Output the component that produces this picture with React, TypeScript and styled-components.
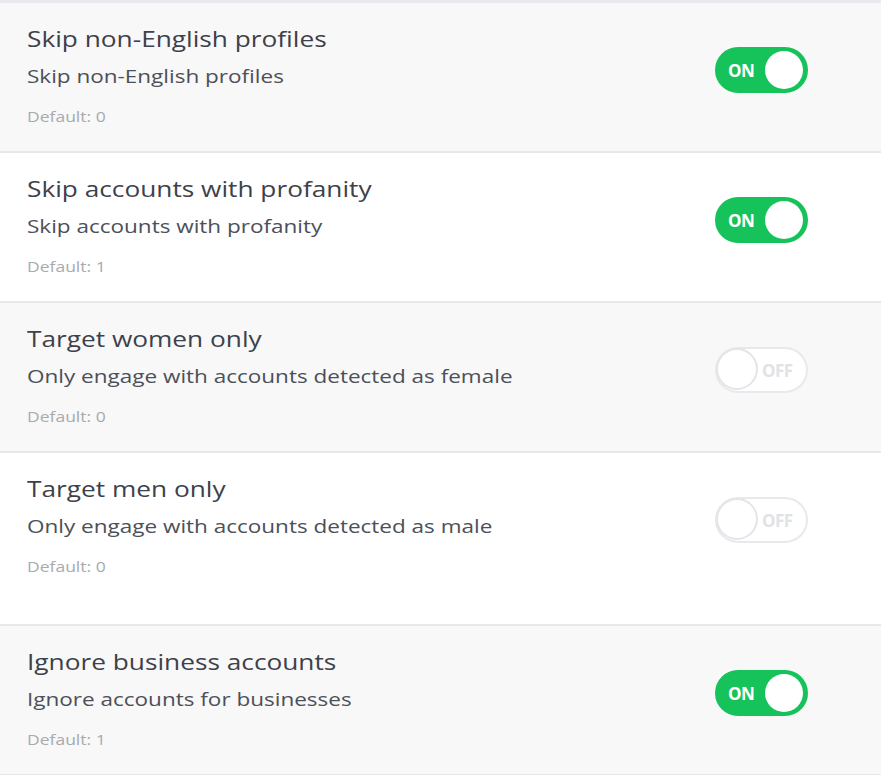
import React from "react";
import styled, { createGlobalStyle } from "styled-components";

const Global = createGlobalStyle`
  html, body { margin: 0; padding: 0; background: #ffffff; }
  body { font-family: "Open Sans", "Noto Sans", sans-serif; }
`;

const List = styled.div`
  display: flex;
  flex-direction: column;
  border-top: 3px solid #e9eaed;
`;

const Row = styled.div<{ $shaded: boolean; $extra?: number }>`
  display: flex;
  justify-content: space-between;
  align-items: flex-start;
  padding: 22px 73px ${(p) => 24 + (p.$extra ?? 0)}px 27px;
  background: ${(p) => (p.$shaded ? "#f8f8f8" : "#ffffff")};
  border-bottom: 2px solid #e7e8eb;
`;

const Texts = styled.div`
  display: flex;
  flex-direction: column;
  transform: scaleX(1.25);
  transform-origin: left top;
`;

const Title = styled.div`
  font-size: 21px;
  line-height: 28px;
  color: #3d414a;
  white-space: nowrap;
`;

const Subtitle = styled.div`
  margin-top: 10px;
  font-size: 18px;
  line-height: 26px;
  color: #4c5059;
  white-space: nowrap;
`;

const DefaultText = styled.div`
  margin-top: 18px;
  font-size: 14px;
  line-height: 20px;
  color: #a8aaae;
  white-space: nowrap;
`;

const Switch = styled.div<{ $on: boolean }>`
  position: relative;
  box-sizing: border-box;
  margin-top: 22px;
  width: 93px;
  height: 46px;
  border-radius: 23px;
  display: flex;
  align-items: center;
  flex-shrink: 0;
  background: ${(p) => (p.$on ? "#16c25a" : "#ffffff")};
  border: 2px solid ${(p) => (p.$on ? "#16c25a" : "#e8e9ec")};
`;

const Knob = styled.div<{ $on: boolean }>`
  position: absolute;
  top: ${(p) => (p.$on ? 2 : -1)}px;
  ${(p) => (p.$on ? "right: 3px;" : "left: -1px;")}
  box-sizing: border-box;
  width: ${(p) => (p.$on ? 38 : 42)}px;
  height: ${(p) => (p.$on ? 38 : 42)}px;
  border-radius: 50%;
  background: #ffffff;
  border: ${(p) => (p.$on ? "none" : "2px solid #e4e5e9")};
`;

const SwitchLabel = styled.span<{ $on: boolean }>`
  font-weight: 700;
  font-size: 17px;
  letter-spacing: -0.6px;
  color: ${(p) => (p.$on ? "#ffffff" : "#e1e2e6")};
  ${(p) => (p.$on ? "margin-left: 11px;" : "margin-left: 45px;")}
`;

type Setting = {
  title: string;
  description: string;
  def: number;
  on: boolean;
  extra?: number;
};

const settings: Setting[] = [
  { title: "Skip non-English profiles", description: "Skip non-English profiles", def: 0, on: true },
  { title: "Skip accounts with profanity", description: "Skip accounts with profanity", def: 1, on: true },
  { title: "Target women only", description: "Only engage with accounts detected as female", def: 0, on: false },
  { title: "Target men only", description: "Only engage with accounts detected as male", def: 0, on: false, extra: 23 },
  { title: "Ignore business accounts", description: "Ignore accounts for businesses", def: 1, on: true },
];

export default function App() {
  return (
    <>
      <Global />
      <List>
        {settings.map((s, i) => (
          <Row key={s.title} $shaded={i % 2 === 0} $extra={s.extra}>
            <Texts>
              <Title>{s.title}</Title>
              <Subtitle>{s.description}</Subtitle>
              <DefaultText>Default: {s.def}</DefaultText>
            </Texts>
            <Switch $on={s.on}>
              <SwitchLabel $on={s.on}>{s.on ? "ON" : "OFF"}</SwitchLabel>
              <Knob $on={s.on} />
            </Switch>
          </Row>
        ))}
      </List>
    </>
  );
}
